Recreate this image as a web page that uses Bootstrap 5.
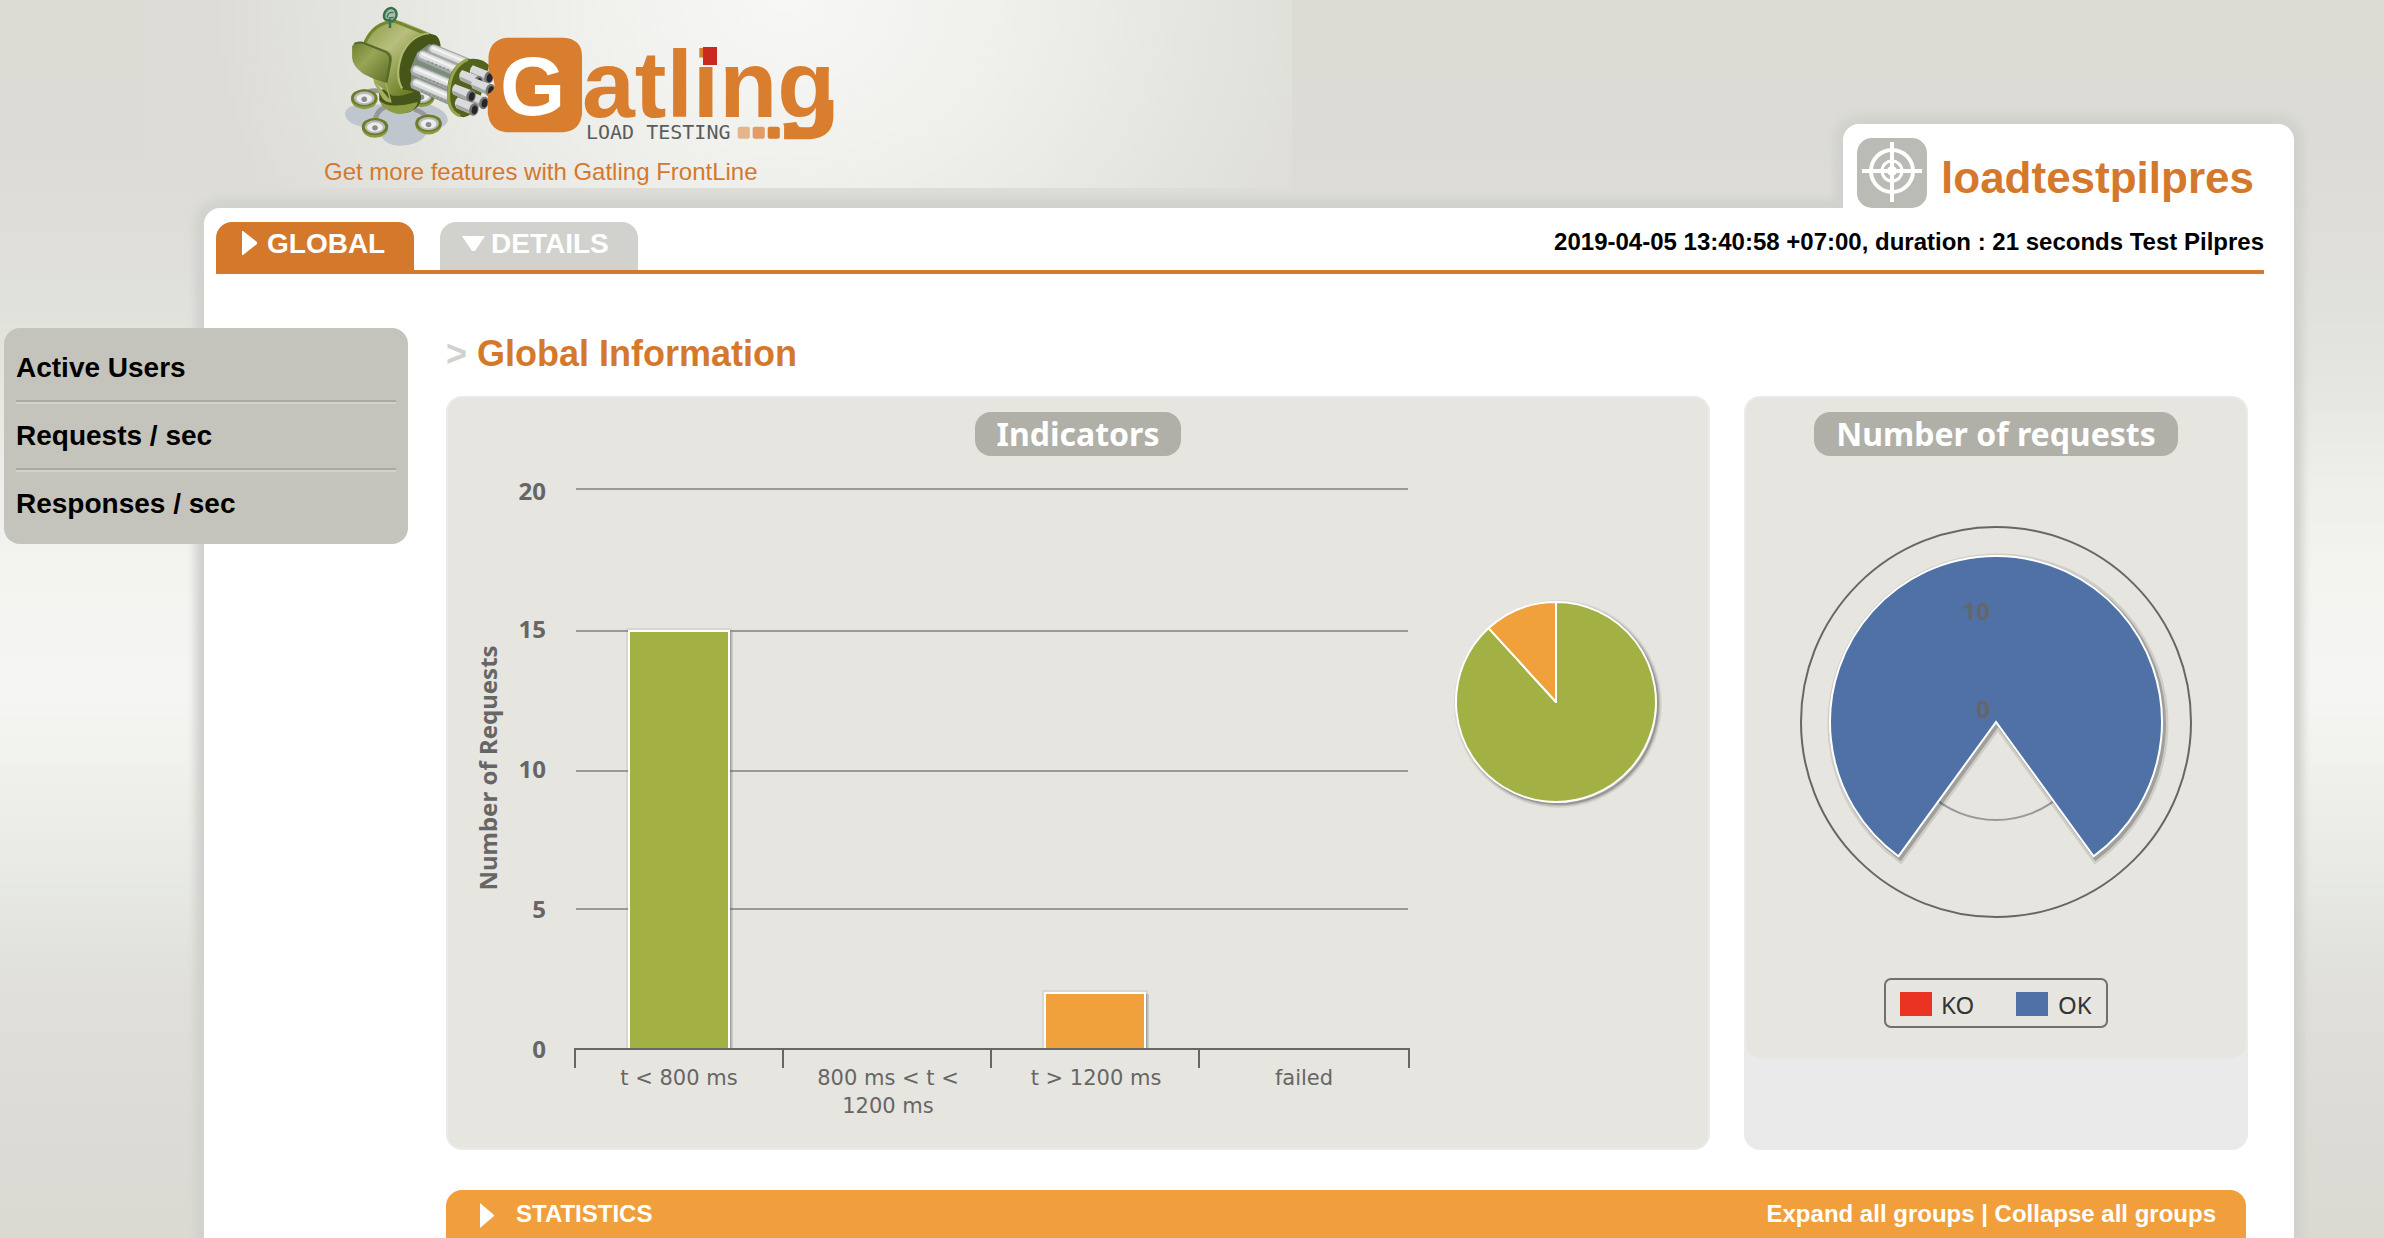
<!DOCTYPE html>
<html lang="en">
<head>
<meta charset="utf-8">
<meta name="viewport" content="width=device-width, initial-scale=1">
<title>Gatling Stats - Global Information</title>
<link href="https://cdn.jsdelivr.net/npm/bootstrap@5.3.0/dist/css/bootstrap.min.css" rel="stylesheet">
<style>
  :root { --brand: #d4792c; --amber: #f19f3c; --shade: #d1d2cd; --panel: #e6e5e0; }
  body {
    font-family: "Liberation Sans", Arial, sans-serif; font-size: 24px; line-height: 28px; color: #000;
    background: linear-gradient(#dcdcd4 0, #dcdbd6 12%, #dfdeda 20%, #e4e5df 30%, #eeefea 39%, #f3f3f0 46%, #f5f5f3 56%, #efefea 64%, #e6e8e2 72%, #e0dfda 80%, #dcdbd5 90%, #dadad3 100%);
  }
  a { color: inherit; text-decoration: none; }
  .masthead { height: 208px; padding-left: 144px; padding-right: 90px; }
  .brand-area {
    width: 1148px; height: 188px;
    background: radial-gradient(ellipse 580px 480px at 56% 0, #f7f7f5 0, #f0f0ed 35%, #e5e5e0 72%, #dddcd7 100%);
  }
  .brand-logo { display: block; height: 158px; width: 560px; margin-left: 166px; }
  .promo { color: var(--brand); margin-left: 180px; }
  .project-tab {
    height: 84px; padding: 0 40px 0 14px; gap: 14px; border-radius: 16px 16px 0 0; background: #fff;
    box-shadow: 0 0 8px 9px var(--shade); clip-path: inset(-24px -24px 0 -24px); z-index: 2;
  }
  .project-tab h1 { color: var(--brand); font-size: 44px; line-height: 52px; font-weight: 700; }
  .report {
    margin-left: 204px; margin-right: 90px; padding: 14px 30px 0 12px; background: #fff;
    border-top-left-radius: 16px; box-shadow: 0 0 8px 9px var(--shade);
  }
  .view-tabs { border-bottom: 4px solid var(--brand); gap: 26px; }
  .view-tabs a {
    width: 198px; height: 48px; padding: 6px 0 0 22px; gap: 6px; font-size: 28px; line-height: 32px; font-weight: 700;
    color: #fff; background: var(--shade); border-radius: 16px 16px 0 0;
  }
  .view-tabs a.current { background: var(--brand); padding-left: 26px; gap: 10px; }
  .tri { margin-top: 3px; }
  .run-info { font-weight: 700; padding-top: 6px; }
  .details { padding: 56px 16px 0 230px; }
  .section-title { font-size: 36px; line-height: 48px; font-weight: 700; color: var(--brand); margin-bottom: 18px; }
  .section-title span { color: var(--shade); }
  .side-menu {
    position: absolute; left: 4px; top: 328px; width: 404px; padding: 8px 12px 4px; z-index: 3;
    background: #c5c4bc; border-radius: 16px; font-size: 28px; font-weight: 700;
  }
  .side-menu li { padding: 16px 0 20px; line-height: 32px; }
  .side-menu li + li { border-top: 2px solid #d2d2cd; }
  .side-menu li:not(:last-child) { padding-bottom: 16px; border-bottom: 2px solid #aaaaa5; }
  .charts { gap: 34px; margin-bottom: 40px; }
  .chart-box { background: #eaeaea; border-radius: 16px; padding: 2px; min-width: 0; }
  .chart-face { background: var(--panel); border-radius: 14px; padding-top: 14px; }
  .chart-box svg { display: block; width: 100%; height: auto; }
  .chart-title {
    font: 700 32px/44px "Noto Sans", sans-serif; color: #fff; background: #b0b0a8; border-radius: 16px; padding: 0 22px; margin: 0;
  }
  .requests-box { flex: 0 0 504px; }
  .requests-box .chart-face { height: 660px; }
  .stats-bar { background: var(--amber); color: #fff; font-weight: 700; height: 48px; padding: 10px 30px 0 34px; margin-right: 2px; border-radius: 16px 16px 0 0; }
  .stats-bar svg { margin-right: 22px; }
  .axis-bold { font: 700 24px "Noto Sans", sans-serif; fill: #666; }
  .axis-plain { font: 400 21px "DejaVu Sans", sans-serif; fill: #666; }
  .legend-text { font: 400 24px "Noto Sans", sans-serif; fill: #333; }
</style>
</head>
<body class="min-vh-100 position-relative">

<header class="masthead d-flex justify-content-between">
  <div class="brand-area">
    <a href="#" aria-label="Gatling Load Testing">
    <svg class="brand-logo" viewBox="0 0 560 158">
      <defs>
        <linearGradient id="hull" x1="0" y1="0" x2="1" y2="1"><stop offset="0" stop-color="#87983e"/><stop offset=".35" stop-color="#b9bf7e"/><stop offset=".7" stop-color="#76872f"/><stop offset="1" stop-color="#4c5c1c"/></linearGradient>
        <linearGradient id="pod" x1="0" y1="0" x2="1" y2="1"><stop offset="0" stop-color="#6c7f2c"/><stop offset=".4" stop-color="#97a656"/><stop offset="1" stop-color="#5a6a20"/></linearGradient>
        <g id="wheel"><ellipse rx="37" ry="30" fill="#8c9c40"/><ellipse rx="37" ry="26" cy="-4" fill="#6b7c2b"/><ellipse rx="29" ry="20" cy="-3" fill="#b9bab8"/><ellipse rx="22" ry="14" cy="-2" fill="#eceded"/><circle r="8" fill="#8b8b90"/></g>
        <g id="barrel"><path d="M-40-32 L8-12 Q18 2 4 22 L-44 0 Q-54-16-40-32Z" fill="#d9dadb"/><path d="M-46-12 L0 10 L4 22 L-44 0Z" fill="#a4a6a8"/><ellipse cx="5" cy="5" rx="13" ry="19" fill="#777" transform="rotate(12 5 5)"/><ellipse cx="7" cy="6" rx="8" ry="13" fill="#262626" transform="rotate(12 7 6)"/></g>
      </defs>
      <g transform="scale(.357 .333)">
        <path d="M98 340 Q104 312 150 316 L320 308 Q388 330 386 364 Q376 388 330 396 Q310 438 250 438 Q212 436 200 410 Q150 405 148 380 Q100 372 98 340Z" fill="#bfc6cd"/>
        <path d="M156 282 Q168 266 206 276 M182 366 Q184 334 210 322 M332 364 Q324 338 292 328" fill="none" stroke="#97979c" stroke-width="14"/>
        <use href="#wheel" x="152" y="298"/><use href="#wheel" x="312" y="292"/><use href="#wheel" x="182" y="384"/><use href="#wheel" x="332" y="374"/>
        <path d="M194 280 Q206 250 300 264 Q322 292 302 320 Q284 342 250 340 Q204 330 194 300Z" fill="#46561a"/>
        <path d="M194 300 Q216 330 302 306 Q294 342 246 342 Q206 334 194 300Z" fill="#8b9c43"/>
        <path d="M150 128 Q176 62 236 60 Q258 60 352 108 L366 140 L290 276 Q250 292 228 286 L180 248Z" fill="url(#hull)"/>
        <path d="M154 128 Q180 66 238 64 L344 110" fill="none" stroke="#75862e" stroke-width="9"/>
        <path d="M352 106 Q298 84 264 148 Q232 220 258 268 L300 276 Q280 190 366 138 Q364 114 352 106Z" fill="#465619"/>
        <path d="M334 100 Q284 104 258 162 Q236 226 258 266" fill="none" stroke="#b1ba70" stroke-width="6"/>
        <path d="M118 140 Q124 122 150 126 L214 152 Q232 160 230 180 L216 250 Q180 240 150 222 Q120 200 118 174Z" fill="url(#pod)"/>
        <path d="M124 132 Q136 124 152 130 L212 156 Q228 166 224 188 L214 248" fill="none" stroke="#56682a" stroke-width="6"/>
        <path d="M180 246 L226 306 Q210 306 202 290Z M212 248 L226 304" fill="#a5b05c" stroke="#a5b05c" stroke-width="4"/>
        <path d="M334 132 L460 186 L420 330 L384 312 L282 264 L284 200 L300 158Z" fill="#7c8d7c"/>
        <g stroke-linecap="round" fill="none">
          <path d="M346 150 L450 196 M316 168 L430 220 M298 212 L420 266 M298 252 L400 298" stroke="#a6a8aa" stroke-width="34"/>
          <path d="M346 147 L450 193 M316 165 L430 217 M298 209 L420 263 M298 249 L400 295" stroke="#dcddde" stroke-width="21"/>
          <path d="M344 144 L446 190 M314 162 L426 214 M296 206 L416 260 M296 246 L396 292" stroke="#f3f3f3" stroke-width="7"/>
          <path d="M330 184 L394 212 M312 230 L382 261 M312 273 L380 304" stroke="#7f9484" stroke-width="4" stroke-dasharray="4 8"/>
        </g>
        <path d="M384 290 Q382 198 440 178 Q480 170 502 196 L470 320 Q452 350 430 352 Q388 346 384 290Z" fill="#52631c"/>
        <path d="M420 348 Q386 334 388 282 Q392 200 442 178" fill="none" stroke="#96a54d" stroke-width="9"/>
        <use href="#barrel" x="496" y="228"/><use href="#barrel" x="466" y="242"/><use href="#barrel" x="500" y="266"/><use href="#barrel" x="482" y="304"/><use href="#barrel" x="446" y="284"/><use href="#barrel" x="454" y="324"/>
        <path d="M224 84 V64 M224 60 Q204 64 208 42 Q214 24 228 24 Q244 28 242 48 Q238 64 224 64Z" fill="#a8bfae" stroke="#37734f" stroke-width="7"/>
        <path d="M216 52 Q218 34 234 38 M220 54 L234 52" fill="none" stroke="#37734f" stroke-width="4"/>
        <path d="M550 113 H710 Q762 116 762 170 V340 Q758 392 710 397 H550 Q504 392 498 340 V282 Q520 272 516 250 Q514 228 500 214 V170 Q504 120 550 113Z" fill="#d87e2e"/>
        <rect x="1198" y="381" width="34" height="36" rx="6" fill="#e6b48b"/>
        <rect x="1240" y="381" width="34" height="36" rx="6" fill="#e19d67"/>
        <rect x="1282" y="381" width="34" height="36" rx="6" fill="#d87e2e"/>
        <path d="M1328 400 H1400 Q1448 398 1448 350 V300" fill="none" stroke="#d87e2e" stroke-width="36"/>
      </g>
      <g font-family="Liberation Sans, Arial, sans-serif" font-weight="700">
        <text x="190" y="115" font-size="84" fill="#fff">G</text>
        <text x="272" y="117" font-size="95" fill="#d87e2e">atling</text>
      </g>
      <rect x="393" y="47" width="14" height="18" fill="#cb2920"/>
      <text x="276" y="139" font-size="20" font-family="DejaVu Sans Mono, monospace" fill="#5c5c5c">LOAD TESTING</text>
    </svg>
    </a>
    <a class="promo" href="#">Get more features with Gatling FrontLine</a>
  </div>
  <div class="project-tab d-flex align-items-end align-self-end position-relative">
    <svg width="70" height="70" viewBox="0 0 70 70" aria-hidden="true">
      <rect width="70" height="70" rx="15" fill="#babbb5"/>
      <g fill="none" stroke="#fff"><circle cx="35" cy="33" r="21" stroke-width="4"/><circle cx="35" cy="33" r="10" stroke-width="3"/><path d="M35 4V64M5 33H65" stroke-width="4"/></g>
      <circle cx="35" cy="33" r="5" fill="#fff"/>
    </svg>
    <h1 class="m-0 mb-1">loadtestpilpres</h1>
  </div>
</header>

<nav aria-label="Sections">
  <ul class="side-menu list-unstyled m-0">
    <li><a href="#">Active Users</a></li>
    <li><a href="#">Requests / sec</a></li>
    <li><a href="#">Responses / sec</a></li>
  </ul>
</nav>

<main class="report">
  <div class="view-tabs d-flex">
    <a class="current d-flex" href="#"><svg width="15" height="24" viewBox="0 0 15 24" class="tri" aria-hidden="true"><path d="M0 0H1L15 11V13L1 24H0Z" fill="#fff"/></svg>GLOBAL</a>
    <a class="d-flex" href="#"><svg width="23" height="24" viewBox="0 0 23 24" class="tri" aria-hidden="true"><path d="M0 5H23L13 20H10Z" fill="#fff"/></svg>DETAILS</a>
    <p class="run-info m-0 ms-auto">2019-04-05 13:40:58 +07:00, duration : 21 seconds Test Pilpres</p>
  </div>

  <div class="details">
    <h2 class="section-title mt-0"><span>&gt;</span> Global Information</h2>

    <div class="charts d-flex">
      <section class="chart-box flex-fill">
        <div class="chart-face d-flex flex-column align-items-center">
          <h3 class="chart-title">Indicators</h3>
          <svg viewBox="448 456 1260 692" role="img" aria-label="Indicators by response time">
            <g fill="#999"><path d="M576 488h832v2h-832zM576 630h832v2h-832zM576 770h832v2h-832zM576 908h832v2h-832z"/></g>
            <g fill="#666" fill-opacity=".1"><rect x="626" y="628" width="106" height="420"/><rect x="1042" y="990" width="106" height="58"/></g>
            <g fill="#555" fill-opacity=".2"><rect x="630" y="632" width="103" height="416"/><rect x="1046" y="994" width="103" height="54"/></g>
            <g fill="#555" fill-opacity=".3"><rect x="630" y="632" width="101" height="416"/><rect x="1046" y="994" width="101" height="54"/></g>
            <path d="M628 630h102v418h-102zM1044 992h102v56h-102z" fill="#fff"/>
            <rect x="630" y="632" width="98" height="416" fill="#a3b044"/>
            <rect x="1046" y="994" width="98" height="54" fill="#f0a13b"/>
            <path d="M574 1048h836v2h-836zM574 1050h2v18h-2zM782 1050h2v18h-2zM990 1050h2v18h-2zM1198 1050h2v18h-2zM1408 1050h2v18h-2z" fill="#666"/>
            <g class="axis-bold" text-anchor="end"><text x="546" y="500">20</text><text x="546" y="638">15</text><text x="546" y="778">10</text><text x="546" y="918">5</text><text x="546" y="1058">0</text></g>
            <text class="axis-bold" text-anchor="middle" transform="translate(497 768) rotate(-90)">Number of Requests</text>
            <g class="axis-plain" text-anchor="middle"><text x="679" y="1085">t &lt; 800 ms</text><text x="888" y="1085">800 ms &lt; t &lt;</text><text x="888" y="1113">1200 ms</text><text x="1096" y="1085">t &gt; 1200 ms</text><text x="1304" y="1085">failed</text></g>
            <g fill="none" stroke="#000"><circle cx="1558" cy="704" r="100" stroke-width="8" stroke-opacity=".06"/><circle cx="1558" cy="704" r="100" stroke-width="5" stroke-opacity=".12"/><circle cx="1558" cy="704" r="100" stroke-width="2" stroke-opacity=".2"/></g>
            <g stroke="#fff" stroke-width="2" stroke-linejoin="round"><path d="M1556 702V602A100 100 0 1 1 1488.600 628.100Z" fill="#a3b044"/><path d="M1556 702L1488.600 628.100A100 100 0 0 1 1556 602Z" fill="#f0a13b"/></g>
          </svg>
        </div>
      </section>

      <section class="chart-box requests-box">
        <div class="chart-face d-flex flex-column align-items-center">
          <h3 class="chart-title">Number of requests</h3>
          <svg viewBox="1746 456 500 602" role="img" aria-label="Number of requests, OK and KO">
            <g fill="none"><circle cx="1996" cy="722" r="195" stroke="#666" stroke-width="2"/><circle cx="1996" cy="722" r="98" stroke="#999" stroke-width="2"/></g>
            <g fill="none" stroke="#000"><path d="M1998 724L1900.400 858.300A166 166 0 1 1 2095.600 858.300Z" stroke-width="9" stroke-opacity=".1"/><path d="M1998 724L1900.400 858.300A166 166 0 1 1 2095.600 858.300Z" stroke-width="4" stroke-opacity=".22"/></g>
            <path d="M1996 722L1898.400 856.300A166 166 0 1 1 2093.600 856.300Z" fill="#4f71a5" stroke="#fff" stroke-width="2"/>
            <g class="axis-bold" text-anchor="end"><text x="1990" y="620">10</text><text x="1990" y="718">0</text></g>
            <rect x="1885" y="979" width="222" height="48" rx="6" fill="none" stroke="#707070" stroke-width="2"/>
            <rect x="1900" y="992" width="32" height="24" fill="#ea3323"/><rect x="2016" y="992" width="32" height="24" fill="#4f71a5"/>
            <g class="legend-text"><text x="1941" y="1014">KO</text><text x="2058" y="1014">OK</text></g>
          </svg>
        </div>
      </section>
    </div>

    <div class="stats-bar d-flex">
      <svg width="14" height="26" viewBox="0 0 14 26" class="tri" aria-hidden="true"><path d="M0 0L14 12V13L0 25Z" fill="#fff"/></svg>
      <span>STATISTICS</span>
      <span class="ms-auto"><a href="#">Expand all groups</a> | <a href="#">Collapse all groups</a></span>
    </div>
  </div>
</main>

<script src="https://cdn.jsdelivr.net/npm/bootstrap@5.3.0/dist/js/bootstrap.bundle.min.js"></script>
</body>
</html>
